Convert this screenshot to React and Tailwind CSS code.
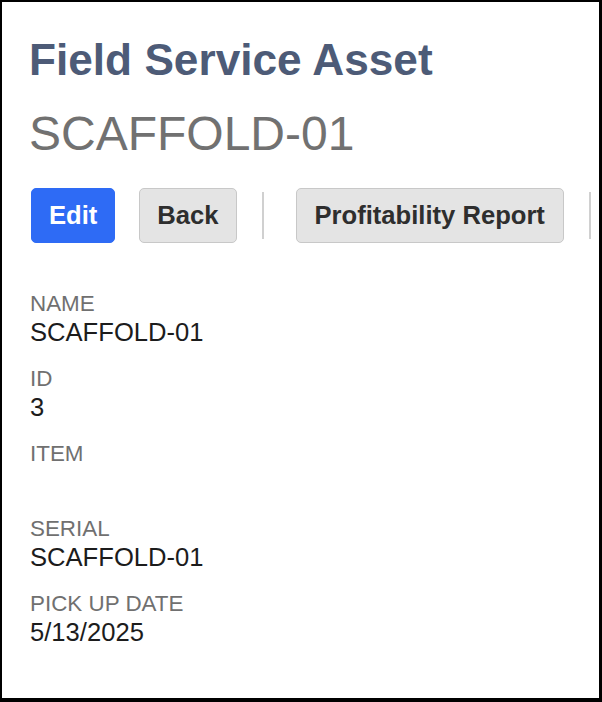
import React from 'react';

const fields = [
  { label: 'NAME', value: 'SCAFFOLD-01' },
  { label: 'ID', value: '3' },
  { label: 'ITEM', value: '' },
  { label: 'SERIAL', value: 'SCAFFOLD-01' },
  { label: 'PICK UP DATE', value: '5/13/2025' },
];

function Field({ label, value }) {
  return (
    <div className="mb-[19px] -ml-px">
      <div className="text-[22.4px] leading-[26px] text-[#707070]">{label}</div>
      <div className="text-[25.6px] leading-[30px] text-[#1c1c1c] min-h-[30px]">{value}</div>
    </div>
  );
}

export default function App() {
  return (
    <div className="h-[702px] w-[602px] overflow-hidden bg-white border-t-2 border-l-2 border-r-[3px] border-b-[4px] border-black font-['Liberation_Sans',Arial,sans-serif]">
      <div className="pl-[29px] pt-[32px]">
        {/* Header */}
        <h1 className="-ml-[2px] text-[44.2px] leading-[52px] font-bold text-[#4d5b77]">Field Service Asset</h1>
        <h2 className="-ml-[2px] mt-[20px] text-[48px] leading-[55px] text-[#717171]">SCAFFOLD-01</h2>

        {/* Toolbar */}
        <div className="mt-[27px] flex items-center">
          <button className="h-[55px] px-[17px] rounded-[5px] border border-[#2e6bf5] bg-[#2e6bf5] text-white text-[25.6px] font-bold">
            Edit
          </button>
          <button className="ml-[24px] h-[55px] px-[17px] rounded-[5px] border border-[#c8c8c8] bg-[#e4e4e4] text-[#2e2e2e] text-[25.6px] font-bold">
            Back
          </button>
          <div className="ml-[25px] h-[47px] w-[2px] bg-[#d0d0d0]" />
          <button className="ml-[32px] h-[55px] px-[18px] rounded-[5px] border border-[#c8c8c8] bg-[#e4e4e4] text-[#2e2e2e] text-[25.6px] font-bold whitespace-nowrap">
            Profitability Report
          </button>
          <div className="ml-[25px] h-[47px] w-[2px] shrink-0 bg-[#d0d0d0]" />
        </div>

        {/* Fields */}
        <div className="mt-[48px]">
          {fields.map((f) => (
            <Field key={f.label} label={f.label} value={f.value} />
          ))}
        </div>
      </div>
    </div>
  );
}
